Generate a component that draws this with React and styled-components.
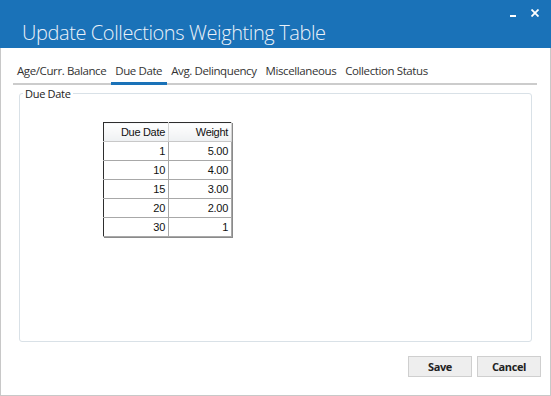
import React from 'react'
import styled, { createGlobalStyle } from 'styled-components'

const GlobalStyle = createGlobalStyle`
  html, body {
    margin: 0;
    padding: 0;
    background: #ffffff;
  }
  * {
    box-sizing: border-box;
  }
`;

const Window = styled.div`
  width: 551px;
  height: 396px;
  display: flex;
  flex-direction: column;
  background: #ffffff;
  border: 1px solid #c8c8c8;
  border-top: none;
  font-family: "Open Sans", "Liberation Sans", sans-serif;
`;

const TitleBar = styled.div`
  height: 48px;
  flex-shrink: 0;
  display: flex;
  align-items: flex-start;
  justify-content: space-between;
  background: #1a72b8;
  margin: 0 -1px;
`;

const Title = styled.h1`
  margin: 0;
  padding: 21px 0 0 22px;
  font-size: 20px;
  line-height: 24px;
  font-weight: 300;
  color: #eaf1f8;
  letter-spacing: -0.4px;
  white-space: nowrap;
`;

const Controls = styled.div`
  display: flex;
  align-items: flex-start;
  gap: 14px;
  padding: 9px 12px 0 0;
`;

const ControlButton = styled.span`
  display: flex;
  width: 8px;
  height: 8px;
  color: #ffffff;
`;

const Body = styled.div`
  flex: 1;
  display: flex;
  flex-direction: column;
  padding: 0 13px 0 12px;
`;

const TabStrip = styled.div`
  display: flex;
  margin-top: 15px;
  border-bottom: 2px solid #cccccc;
`;

const Tab = styled.div`
  padding: 0 5px 4px 4px;
  font-size: 11.5px;
  letter-spacing: -0.4px;
  color: #333333;
  white-space: nowrap;
  margin-bottom: -2px;
  border-bottom: 3px solid ${({ active }) => (active ? '#1a72b8' : 'transparent')};
`;

const GroupBox = styled.fieldset`
  margin: 1px 5px 0 6px;
  padding: 0;
  height: 256px;
  border: 1px solid #d9e1e7;
  border-radius: 3px;
  min-width: 0;
`;

const GroupLabel = styled.legend`
  margin-left: 3px;
  padding: 0 2px;
  font-size: 11px;
  letter-spacing: -0.3px;
  color: #222222;
`;

const GroupContent = styled.div`
  padding: 21px 0 0 83px;
`;

const Grid = styled.table`
  border-collapse: collapse;
  border: 1px solid #2e2e2e;
  box-shadow: 1px 1px 0 #8a8a8a;
  font-family: "Liberation Sans", Arial, sans-serif;
  font-size: 11px;
  letter-spacing: -0.3px;
  color: #111111;
`;

const HeadCell = styled.th`
  width: ${({ w }) => w}px;
  height: 19px;
  padding: 0 3px 0 0;
  text-align: right;
  font-weight: normal;
  background: linear-gradient(#ffffff, #eef0f2);
  border-right: 1px solid #d2d2d2;
  border-bottom: 1px solid #c8c8c8;
`;

const Cell = styled.td`
  height: 19px;
  padding: 0 3px 0 0;
  text-align: right;
  border-right: 1px solid #a8a8a8;
  border-bottom: 1px solid #a8a8a8;
`;

const Footer = styled.div`
  display: flex;
  justify-content: flex-end;
  gap: 5px;
  padding: 14px 0 0 0;
  margin-right: -4px;
`;

const Button = styled.button`
  width: 64px;
  height: 21px;
  padding: 0;
  background: #eeeeee;
  border: 1px solid #cfcfcf;
  font-family: "Open Sans", "Liberation Sans", sans-serif;
  font-size: 11px;
  font-weight: bold;
  letter-spacing: -0.4px;
  color: #222222;
`;

const rows = [
  [1, '5.00'],
  [10, '4.00'],
  [15, '3.00'],
  [20, '2.00'],
  [30, '1'],
];

const tabs = ['Age/Curr. Balance', 'Due Date', 'Avg. Delinquency', 'Miscellaneous', 'Collection Status'];

const App = () => {
  return (
    <>
      <GlobalStyle />
      <Window>
        <TitleBar>
          <Title>Update Collections Weighting Table</Title>
          <Controls>
            <ControlButton>
              <svg width="8" height="8" viewBox="0 0 8 8">
                <rect x="1" y="6" width="6" height="2" fill="currentColor" />
              </svg>
            </ControlButton>
            <ControlButton>
              <svg width="8" height="8" viewBox="0 0 8 8">
                <path d="M0.5 0.5 L7.5 7.5 M7.5 0.5 L0.5 7.5" stroke="currentColor" strokeWidth="1.8" />
              </svg>
            </ControlButton>
          </Controls>
        </TitleBar>
        <Body>
          <TabStrip>
            {tabs.map((t) => (
              <Tab key={t} active={t === 'Due Date'}>{t}</Tab>
            ))}
          </TabStrip>
          <GroupBox>
            <GroupLabel>Due Date</GroupLabel>
            <GroupContent>
              <Grid>
                <thead>
                  <tr>
                    <HeadCell w={65}>Due Date</HeadCell>
                    <HeadCell w={63}>Weight</HeadCell>
                  </tr>
                </thead>
                <tbody>
                  {rows.map(([d, w]) => (
                    <tr key={d}>
                      <Cell>{d}</Cell>
                      <Cell>{w}</Cell>
                    </tr>
                  ))}
                </tbody>
              </Grid>
            </GroupContent>
          </GroupBox>
          <Footer>
            <Button>Save</Button>
            <Button>Cancel</Button>
          </Footer>
        </Body>
      </Window>
    </>
  )
}

export default App
